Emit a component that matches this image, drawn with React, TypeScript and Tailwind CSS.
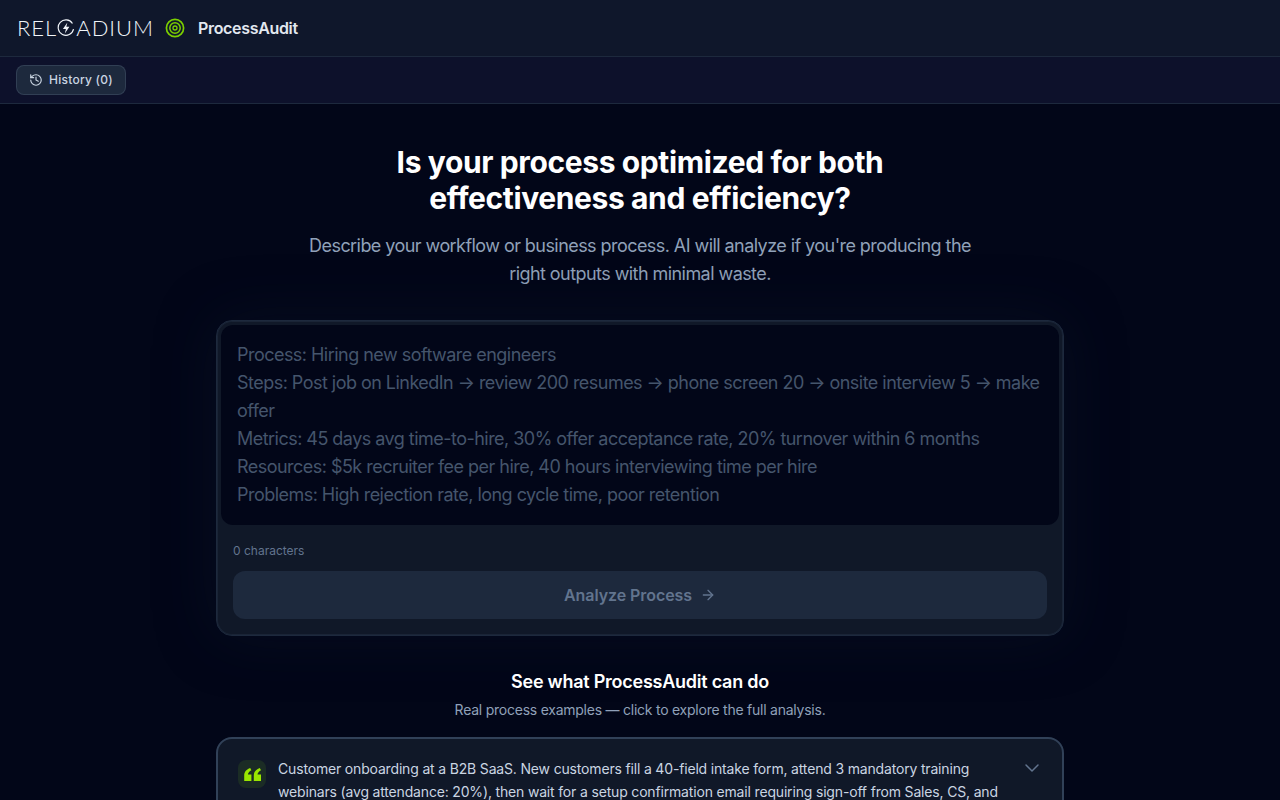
import { ArrowRight, ChevronDown, History } from "lucide-react";

const placeholder = `Process: Hiring new software engineers
Steps: Post job on LinkedIn → review 200 resumes → phone screen 20 → onsite interview 5 → make offer
Metrics: 45 days avg time-to-hire, 30% offer acceptance rate, 20% turnover within 6 months
Resources: $5k recruiter fee per hire, 40 hours interviewing time per hire
Problems: High rejection rate, long cycle time, poor retention`;

const Logo = () => (
  <div className="flex items-center font-['Lato',sans-serif] text-[22px] font-light leading-none tracking-[0.045em] text-[#f1f5f9]">
    <span>REL</span>
    <svg width="18" height="18" viewBox="0 0 17 17" fill="none" className="mr-[1px]">
      <path d="M14.6 4.2A7.3 7.3 0 1 0 15.6 9.6" stroke="#f1f5f9" strokeWidth="1.1" />
      <path d="M9.8 3.4 5.6 9.4h2.8l-1 4.2 4.3-6.2H8.8z" fill="#f1f5f9" />
    </svg>
    <span>ADIUM</span>
  </div>
);

const Target = () => (
  <svg width="20" height="20" viewBox="0 0 20 20" fill="none">
    <circle cx="10" cy="10" r="8.6" stroke="#7ccf00" strokeWidth="1.7" />
    <circle cx="10" cy="10" r="5.2" stroke="#7ccf00" strokeWidth="1.5" />
    <circle cx="10" cy="10" r="2" stroke="#7ccf00" strokeWidth="1.3" />
  </svg>
);

const Quote = () => (
  <svg width="17" height="13" viewBox="0 0 17 13" fill="#9ae600">
    <path d="M6.2 0C2.6 1.2 0.2 3.8 0.2 7.4V13H7.4V6.6H3.9C4.1 4.8 5.4 3.2 7.4 2.2z" />
    <path d="M15.8 0C12.2 1.2 9.8 3.8 9.8 7.4V13H17V6.6H13.5C13.7 4.8 15 3.2 17 2.2z" />
  </svg>
);

export default function App() {
  return (
    <div className="h-[800px] overflow-hidden bg-[#020618] font-['Inter',sans-serif]">
      <header className="flex h-[57px] items-center gap-3 border-b border-[#1d293d] bg-[#0f172b] pl-[17px]">
        <Logo />
        <div className="-ml-[1px]">
          <Target />
        </div>
        <span className="ml-[1px] text-base font-semibold tracking-[-0.33px] text-[#e2e8f0]">ProcessAudit</span>
      </header>

      <div className="flex h-[47px] items-center border-b border-[#1d293d] bg-[#0d112b] px-4">
        <button className="flex h-[30px] w-[110px] items-center gap-[6px] whitespace-nowrap rounded-lg border border-[#45556c80] bg-[#1d293d] px-3 text-xs font-medium tracking-[0.25px] text-[#cad5e2]">
          <History size={14} />
          History (0)
        </button>
      </div>

      <main className="mx-auto flex max-w-[848px] flex-col items-center pt-10">
        <h1 className="text-center text-3xl font-bold tracking-[-0.38px] text-white">
          Is your process optimized for both
          <br />
          effectiveness and efficiency?
        </h1>
        <p className="mt-4 max-w-[672px] text-center text-lg tracking-[-0.56px] text-[#90a1b9]">
          Describe your workflow or business process. AI will analyze if you're producing the right outputs with minimal waste.
        </p>

        <section className="mt-8 w-full rounded-2xl border border-[#1d293d] bg-[#101828] shadow-[inset_0_0_0_1px_#1a2436,0_0_60px_rgba(15,23,43,0.4)]">
          <div className="m-1 mb-0 h-[200px] whitespace-pre-wrap rounded-xl bg-[#020618] p-4 text-lg tracking-[-0.53px] text-[#45556c]">
            {placeholder}
          </div>
          <div className="px-4 pb-4">
            <p className="mt-[18px] text-xs text-[#62748e]">0 characters</p>
            <button className="mt-3 flex h-12 w-full items-center justify-center gap-2 rounded-xl bg-[#1d293d] font-semibold tracking-[-0.07px] text-[#62748e]">
              Analyze Process
              <ArrowRight size={16} />
            </button>
          </div>
        </section>

        <h2 className="mt-8 text-lg font-semibold tracking-[-0.25px] text-white">See what ProcessAudit can do</h2>
        <p className="mt-[4px] text-sm tracking-[-0.24px] text-[#90a1b9]">Real process examples — click to explore the full analysis.</p>

        <section className="mt-[17px] flex w-full gap-3 rounded-2xl border-2 border-[#314158] bg-[#101828] py-[19px] pl-5 pr-[18px]">
          <div className="mt-[2px] flex h-7 w-7 shrink-0 items-center justify-center rounded-lg bg-[#1b2c25]">
            <Quote />
          </div>
          <p className="flex-1 text-sm leading-relaxed tracking-[-0.17px] text-[#cad5e2]">
            Customer onboarding at a B2B SaaS. New customers fill a 40-field intake form, attend 3 mandatory training webinars (avg attendance: 20%), then wait for a setup confirmation email requiring sign-off from Sales, CS, and Finance before their account is activated.
          </p>
          <ChevronDown size={24} strokeWidth={1.5} className="-mt-[2px] shrink-0 text-[#62748e]" />
        </section>
      </main>
    </div>
  );
}
